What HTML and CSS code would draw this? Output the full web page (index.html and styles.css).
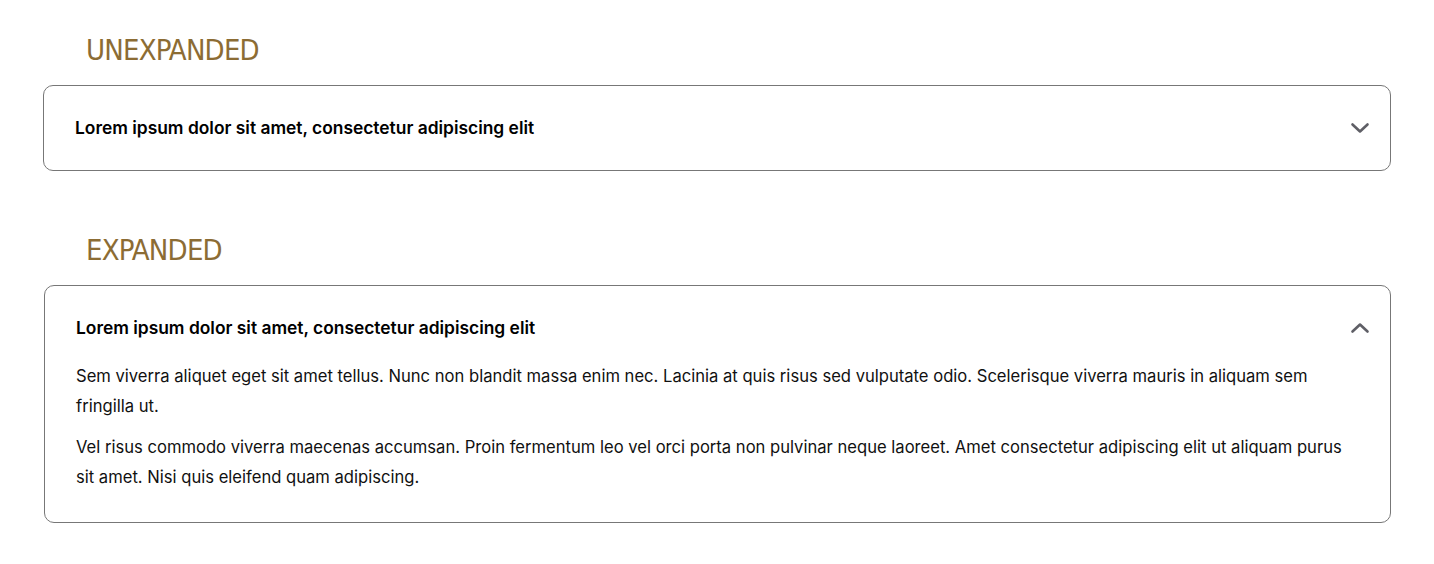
FILE: index.html
```html
<!DOCTYPE html>
<html lang="en">
<head>
    <meta charset="UTF-8">
    <meta name="viewport" content="width=device-width, initial-scale=1.0">
    <title>Accordion</title>
    <link rel="stylesheet" href="styles.css">
</head>
<body>

<div class="page">
    <div class="demo">
        <h2 class="demo-title">UNEXPANDED</h2>
        <div class="accordion">
            <div class="accordion-head">
                <span class="accordion-title">Lorem ipsum dolor sit amet, consectetur adipiscing elit</span>
                <svg class="chevron" width="24" height="24" viewBox="0 0 24 24">
                    <path d="M4.5 8.5 L12 15.5 L19.5 8.5" />
                </svg>
            </div>
        </div>
    </div>

    <div class="demo">
        <h2 class="demo-title">EXPANDED</h2>
        <div class="accordion open">
            <div class="accordion-head">
                <span class="accordion-title">Lorem ipsum dolor sit amet, consectetur adipiscing elit</span>
                <svg class="chevron" width="24" height="24" viewBox="0 0 24 24">
                    <path d="M4.5 15.5 L12 8.5 L19.5 15.5" />
                </svg>
            </div>
            <div class="accordion-body">
                <p>Sem viverra aliquet eget sit amet tellus. Nunc non blandit massa enim nec. Lacinia at quis risus sed vulputate odio. Scelerisque viverra mauris in aliquam sem fringilla ut.</p>
                <p>Vel risus commodo viverra maecenas accumsan. Proin fermentum leo vel orci porta non pulvinar neque laoreet. Amet consectetur adipiscing elit ut aliquam purus sit amet. Nisi quis eleifend quam adipiscing.</p>
            </div>
        </div>
    </div>
</div>

</body>
</html>
```

FILE: styles.css
```css
body {
    font-family: Inter, "Liberation Sans", Arial, sans-serif;
    margin: 0;
    padding: 0;
    background-color: white;
    color: #111;
}
.page {
    padding: 33px 43px 0 43px;
}
.demo {
    margin-bottom: 62px;
}
.demo-title {
    margin: 0 0 18px 43px;
    font-family: "DejaVu Sans Condensed", "DejaVu Sans", sans-serif;
    font-stretch: condensed;
    font-weight: normal;
    font-size: 29px;
    line-height: 34px;
    letter-spacing: -0.8px;
    color: #8c6c34;
}
.accordion {
    border: 1px solid #777;
    border-radius: 10px;
    padding: 30px 18px 30px 31px;
}
.accordion.open {
    margin-left: 1px;
}
.accordion-head {
    display: flex;
    align-items: center;
    justify-content: space-between;
}
.accordion-title {
    font-weight: 600;
    font-size: 17.4px;
    line-height: 24px;
    color: #000;
}
.chevron {
    fill: none;
    stroke: #5f5f66;
    stroke-width: 2.6;
    stroke-linecap: round;
    stroke-linejoin: round;
}
.accordion-body {
    padding-top: 21px;
    padding-right: 13px;
}
.accordion-body p {
    margin: 0 0 11px 0;
    font-size: 16.6px;
    line-height: 30px;
}
.accordion-body p:last-child {
    margin-bottom: 0;
}
```
